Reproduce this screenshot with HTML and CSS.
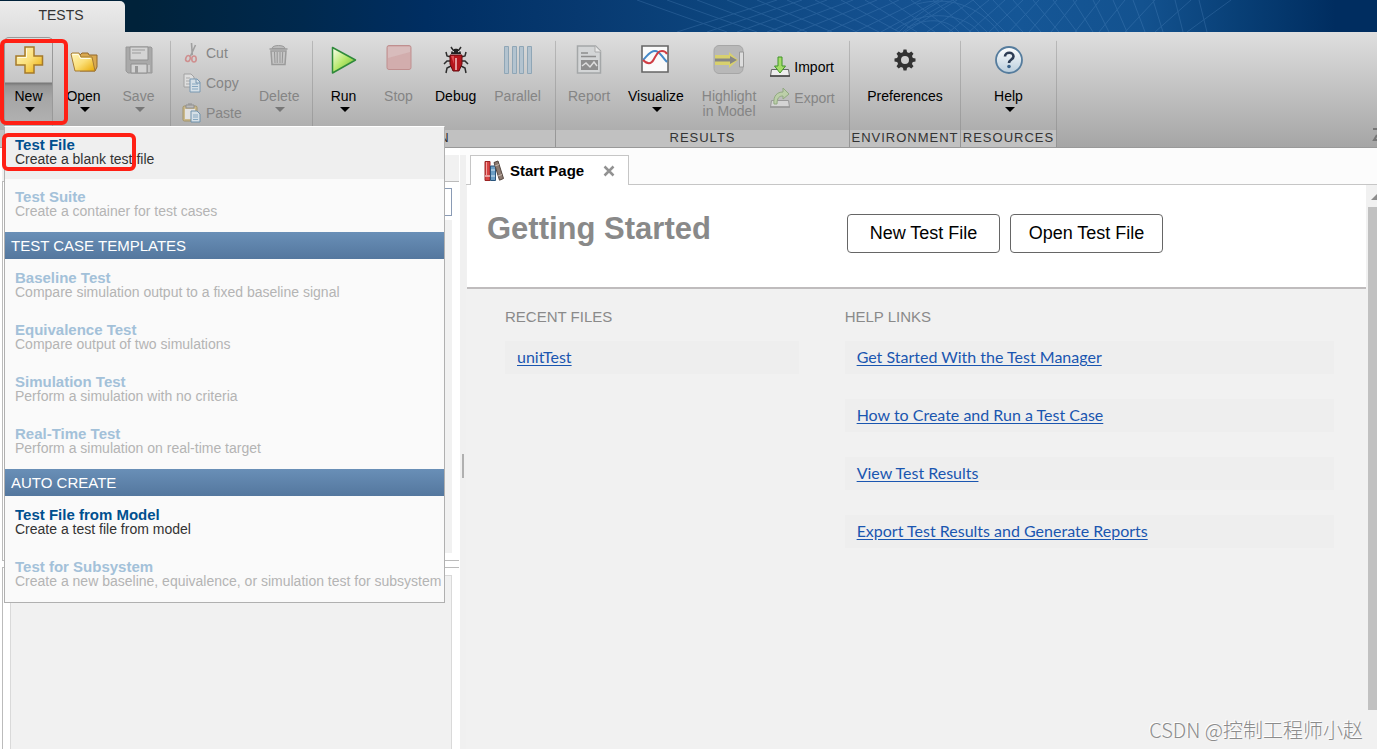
FILE: index.html
```html
<!DOCTYPE html>
<html lang="en">
<head>
<meta charset="utf-8">
<title>Test Manager</title>
<link rel="stylesheet" href="styles.css">
</head>
<body>
<div class="app">
  <header class="banner">
    <svg class="banner-art" viewBox="0 0 800 32" preserveAspectRatio="xMaxYMid slice" fill="none" stroke="#6fa3d8" aria-hidden="true">
      <g opacity=".22">
        <path d="M60 0l90 32M90 0l90 32M120 0l85 32M150 0l80 32M180 0l75 32M210 0l70 32M238 0l64 32M264 0l58 32M288 0l52 32M312 0l46 32M334 0l42 32M356 0l38 32M376 0l34 32M396 0l32 32M416 0l30 32M436 0l28 32M456 0l26 32M476 0l24 32M496 0l20 32M516 0l16 32M536 0l14 32M556 0l12 32M576 0l10 32M598 0l8 32M622 0l8 32"/>
        <path d="M100 32L200 0M130 32l95-32M160 32l90-32M190 32l86-32M220 32l80-32M250 32l72-32M278 32l66-32M304 32l58-32M328 32l52-32M350 32l46-32M372 32l40-32M392 32l36-32M412 32l34-32M432 32l30-32M452 32l28-32M474 32l26-32M498 32l25-32M522 32l26-32M548 32l30-32M578 32l36-32M610 32l44-32"/>
        <path d="M322 32C336 18 346 10 366 0M326 32C340 20 352 12 376 0M318 30C350 6 390 16 402 32M330 28C352 16 372 20 382 32M340 4C370-4 400 4 422 32"/>
      </g>
    </svg>
    <button class="ribbon-tab" type="button">TESTS</button>
  </header>

  <nav class="ribbon" aria-label="Tests">
    <section class="group group-file" aria-label="File">
      <div class="group-body">
        <button class="tool tool-open" type="button" aria-expanded="true">
          <svg class="icon" viewBox="0 0 28 28"><defs><linearGradient id="gold" x1="0" y1="0" x2="1" y2="1"><stop offset="0" stop-color="#fff6bf"/><stop offset=".5" stop-color="#fbe07a"/><stop offset="1" stop-color="#e9a800"/></linearGradient></defs><path d="M10 1h9v9h8.500v9H19v8h-9v-8H1v-9h9z" fill="url(#gold)" stroke="#a5792a" stroke-width="1.500"/><path d="M11.500 2.500v9h-9" fill="none" stroke="#fffbe0"/></svg>
          <span class="tool-label">New</span><span class="caret"></span>
        </button>
        <button class="tool" type="button">
          <svg class="icon" viewBox="0 0 28 28"><path d="M10 9l2-2h6l1 2h8v12l-2 4H10z" fill="#d9a94f" stroke="#94682a"/><path d="M1 8l1-1h7l2 4h11l3 14H5z" fill="url(#gold)" stroke="#a47b35"/><path d="M2.500 8.500h6l2 4h10" fill="none" stroke="#fffde8"/></svg>
          <span class="tool-label">Open</span><span class="caret"></span>
        </button>
        <button class="tool" type="button" disabled>
          <svg class="icon" viewBox="0 0 28 28"><path d="M1 1h25l1 1v25H3l-2-2z" fill="#a9a9a9" stroke="#989898"/><path d="M5 1h18v13H5z" fill="#d4d4d4" stroke="#919191"/><path d="M7 4h13M7 7h9" stroke="#9b9b9b"/><path d="M6 18h16v9H6z" fill="#d2d2d2" stroke="#8f8f8f"/><path d="M10 20h3v7h-3z" fill="#999"/><path d="M23 19h2v7h-2z" fill="#c5c5c5"/></svg>
          <span class="tool-label">Save</span><span class="caret"></span>
        </button>
      </div>
      <div class="group-name"></div>
    </section>

    <section class="group group-edit" aria-label="Edit">
      <div class="group-body">
        <div class="tool-list">
          <button class="tool-row" type="button" disabled>
            <svg class="icon-sm" viewBox="0 0 20 20"><path d="M9.500 0l.8 12M13.500 2l-5 11" stroke="#a0a0a0" stroke-width="1.600"/><ellipse cx="6" cy="15.500" rx="2.200" ry="3" fill="none" stroke="#cf8f8f" stroke-width="1.600" transform="rotate(20 6 15.500)"/><ellipse cx="12" cy="16" rx="2.200" ry="3" fill="none" stroke="#cf8f8f" stroke-width="1.600"/></svg>Cut</button>
          <button class="tool-row" type="button" disabled>
            <svg class="icon-sm" viewBox="0 0 20 20"><path d="M2 1h7l3 3v10H2z" fill="#dedede" stroke="#a2a2a2"/><path d="M4 5h4M4 8h5M4 11h4" stroke="#aaa"/><path d="M8 6h7l3 3v10H8z" fill="#d5dfe6" stroke="#7898b2"/><path d="M10 11h6M10 13.500h6M10 16h6" stroke="#86a7c0"/><path d="M14 6v4h4" fill="none" stroke="#7898b2"/></svg>Copy</button>
          <button class="tool-row" type="button" disabled>
            <svg class="icon-sm" viewBox="0 0 20 20"><rect x="1" y="3" width="14" height="15" rx="1.500" fill="#cbb98b" stroke="#a29368"/><path d="M3 6h10v10H3z" fill="#e2e2e2"/><path d="M4 2h8v3H4zM6 1h4" fill="#bbb" stroke="#8f8f8f"/><path d="M9 8h6l3 3v8H9z" fill="#d5dfe6" stroke="#6f91ac"/><path d="M11 12h5M11 14h5M11 16.500h5" stroke="#86a7c0"/></svg>Paste</button>
        </div>
        <button class="tool" type="button" disabled>
          <svg class="icon" viewBox="0 0 28 28"><path d="M7 2.500c0-4 13-4 13 0z" fill="#bbb" stroke="#999"/><path d="M4.500 3h18M6 5h15l-1 13.500H7z" fill="#c6c6c6" stroke="#9b9b9b" stroke-width="1.500"/><path d="M9.500 6l.5 11M12.200 6v11M15 6v11M17.700 6l-.5 11" stroke="#969696"/></svg>
          <span class="tool-label">Delete</span><span class="caret"></span>
        </button>
      </div>
      <div class="group-name"></div>
    </section>

    <section class="group group-run">
      <div class="group-body">
        <button class="tool" type="button">
          <svg class="icon" viewBox="0 0 28 28"><defs><linearGradient id="lime" x1="0" y1="0" x2="1" y2="1"><stop offset=".1" stop-color="#f1fbd8"/><stop offset=".5" stop-color="#b6e86b"/><stop offset="1" stop-color="#64b52c"/></linearGradient></defs><path d="M2.500 1.500l23 12.500-23 13z" fill="url(#lime)" stroke="#2f8a3b" stroke-width="1.500" stroke-linejoin="round"/></svg>
          <span class="tool-label">Run</span><span class="caret"></span>
        </button>
        <button class="tool" type="button" disabled>
          <svg class="icon" viewBox="0 0 28 28"><rect x="2" y="-.5" width="24" height="24" rx="2" fill="#d2adad" stroke="#bf8f8f"/><path d="M3 12V1h22v5z" fill="#d8bcbc"/></svg>
          <span class="tool-label">Stop</span>
        </button>
        <button class="tool" type="button">
          <svg class="icon" viewBox="0 0 28 28"><g fill="none" stroke="#2c2c2c" stroke-width="1.500"><path d="M9 11L5 10 4 6M19 11l4-1 1-4M8 15H5l-3 3M20 15h3l3 3M9 20l-4 2-1 5M19 20l4 2 1 5M11 4L9 1M17 4l2-3"/></g><path d="M9 8c0-7 10-7 10 0z" fill="#222"/><path d="M9 4l3 2M19 4l-3 2" stroke="#eee"/><path d="M8 9h12v9l-3 7h-6l-3-7z" fill="#b5161c" stroke="#650a0e"/><path d="M14 12v12" stroke="#f3c5c5" stroke-width="1.500"/><path d="M9 10h3v8z" fill="#df4b50"/></svg>
          <span class="tool-label">Debug</span>
        </button>
        <button class="tool" type="button" disabled>
          <svg class="icon" viewBox="0 0 28 28" fill="#b3c3cf" stroke="#8fa6b6"><path d="M.5.500h4v27h-4zM8.500.500h4v27h-4zM15.500.500h4v27h-4zM23.500.500h4v27h-4z"/></svg>
          <span class="tool-label">Parallel</span>
        </button>
      </div>
      <h2 class="group-name">RUN</h2>
    </section>

    <section class="group group-results">
      <div class="group-body">
        <button class="tool" type="button" disabled>
          <svg class="icon" viewBox="0 0 28 28"><path d="M2.500 0h18l5 5v22h-23z" fill="#d3d5d6" stroke="#a4a7a8" stroke-width="1.500"/><path d="M20 0v6h6" fill="#e8e8e8" stroke="#aaa"/><path d="M6 7h7M6 10.500h15" stroke="#8d8d8d" stroke-width="1.500"/><path d="M6 14h17v10H6z" fill="#8e8e8e"/><path d="M7 20l4-3 4 4 4-5 3 4" fill="none" stroke="#ddd" stroke-width="1.500"/></svg>
          <span class="tool-label">Report</span>
        </button>
        <button class="tool" type="button">
          <svg class="icon" viewBox="0 0 28 28"><path d="M0 0h26v26H0z" fill="#fafafa" stroke="#666" stroke-width="1.600"/><g fill="none" stroke-width="2"><path d="M1 14C6 9 8 5 13 5s6 5 12 11" stroke="#4388c8"/><path d="M1 14c4 4 8 5 11-1 3-5 4-8 8-8 3 0 4 1 5 3" stroke="#cf3d43"/></g></svg>
          <span class="tool-label">Visualize</span><span class="caret"></span>
        </button>
        <button class="tool" type="button" disabled>
          <svg class="icon icon-wide" viewBox="0 0 30 28"><rect x="0" y="-.5" width="29" height="28" rx="5" fill="#b8b8b8" stroke="#a6a6a6"/><path d="M1 9h14V6l9 8-9 8v-3H1z" fill="#d8d06d"/><path d="M1 12.500h15V10l7 4-7 4v-2.500H1z" fill="#858585"/><path d="M25.500 6h4v15h-4z" fill="#ddd" stroke="#999"/></svg>
          <span class="tool-label">Highlight<br>in Model</span>
        </button>
        <div class="tool-list tool-list-io">
          <button class="tool-row" type="button">
            <svg class="icon-sm" viewBox="0 0 20 20"><path d="M1.500 12.500h17l1 6.500H.5z" fill="#eee" stroke="#666"/><path d="M0 19h20" stroke="#444" stroke-width="1.500"/><path d="M8 0h4v9h3.500L10 16 4.500 9H8z" fill="#a4dc68" stroke="#3f9427"/></svg>Import</button>
          <button class="tool-row" type="button" disabled>
            <svg class="icon-sm" viewBox="0 0 20 20"><path d="M1.500 12.500h17l1 6.500H.5z" fill="#d4d4d4" stroke="#999"/><path d="M0 19h20" stroke="#999" stroke-width="1.500"/><path d="M4 16C3 8 7 4 13 4V0l6 6-6 5V8c-4 0-6 2-6 8z" fill="#bccfa9" stroke="#91a981"/></svg>Export</button>
        </div>
      </div>
      <h2 class="group-name">RESULTS</h2>
    </section>

    <section class="group group-env">
      <div class="group-body">
        <button class="tool" type="button">
          <svg class="icon" viewBox="0 0 28 28"><g fill="#333"><path id="teeth" d="M12.500 3.500h3l1 5h-5zM12.500 24.500h3l1-5h-5zM3.500 12.500v3l5 1v-5zM24.500 12.500v3l-5 1v-5z"/><use href="#teeth" transform="rotate(45 14 14)"/></g><circle cx="14" cy="14" r="6" fill="none" stroke="#333" stroke-width="4"/></svg>
          <span class="tool-label">Preferences</span>
        </button>
      </div>
      <h2 class="group-name">ENVIRONMENT</h2>
    </section>

    <section class="group group-help">
      <div class="group-body">
        <button class="tool" type="button">
          <svg class="icon" viewBox="0 0 28 28"><defs><linearGradient id="glass" x1="0" y1="0" x2="0" y2="1"><stop offset="0" stop-color="#fff"/><stop offset="1" stop-color="#b9cddc"/></linearGradient></defs><circle cx="14" cy="14" r="13" fill="url(#glass)" stroke="#557c9d" stroke-width="1.800"/><path d="M10 10.500c0-5 8.500-5 8.500 0 0 3-4.500 3-4.500 6.500" fill="none" stroke="#2e3d55" stroke-width="2.600"/><circle cx="14" cy="20.500" r="1.800" fill="#38628a"/></svg>
          <span class="tool-label">Help</span><span class="caret"></span>
        </button>
      </div>
      <h2 class="group-name">RESOURCES</h2>
    </section>
    <svg class="ribbon-pin" viewBox="0 0 4 14" fill="none" stroke="#777" stroke-width="2" aria-hidden="true"><path d="M0 1h4M4 7l-3 5h3"/></svg>

    <div class="menu" role="menu" aria-label="New">
      <div class="menu-group menu-group-first">
        <button class="menu-item menu-item-hover" type="button" role="menuitem"><strong>Test File</strong><span>Create a blank test file</span></button>
        <button class="menu-item" type="button" role="menuitem" disabled><strong>Test Suite</strong><span>Create a container for test cases</span></button>
      </div>
      <h3 class="menu-title">TEST CASE TEMPLATES</h3>
      <div class="menu-group">
        <button class="menu-item" type="button" role="menuitem" disabled><strong>Baseline Test</strong><span>Compare simulation output to a fixed baseline signal</span></button>
        <button class="menu-item" type="button" role="menuitem" disabled><strong>Equivalence Test</strong><span>Compare output of two simulations</span></button>
        <button class="menu-item" type="button" role="menuitem" disabled><strong>Simulation Test</strong><span>Perform a simulation with no criteria</span></button>
        <button class="menu-item" type="button" role="menuitem" disabled><strong>Real-Time Test</strong><span>Perform a simulation on real-time target</span></button>
      </div>
      <h3 class="menu-title">AUTO CREATE</h3>
      <div class="menu-group">
        <button class="menu-item" type="button" role="menuitem"><strong>Test File from Model</strong><span>Create a test file from model</span></button>
        <button class="menu-item" type="button" role="menuitem" disabled><strong>Test for Subsystem</strong><span>Create a new baseline, equivalence, or simulation test for subsystem</span></button>
      </div>
    </div>
    <div class="mark mark-new"></div>
    <div class="mark mark-file"></div>
  </nav>

  <div class="workspace">
    <aside class="browser">
      <div class="browser-tabs"></div>
      <div class="browser-tree">
        <input class="filter" type="text" aria-label="Filter tests">
        <div class="tree"></div>
      </div>
      <div class="browser-props"><div class="props"></div></div>
    </aside>
    <div class="splitter"></div>
    <main class="document">
      <div class="doc-tabs">
        <div class="doc-tab">
          <svg class="books" viewBox="0 0 20 20"><path d="M1 .5h5v19H1z" fill="#d84444" stroke="#9b2424"/><path d="M2.500 1v13" stroke="#f3a4a0"/><path d="M1 15h5" stroke="#fff"/><path d="M6.500 5h5v14.500h-5z" fill="#6b9fc6" stroke="#2a557c"/><path d="M7 9h4M7 15h4" stroke="#d6e8f5"/><path d="M10 1.500l4-1.500 5.500 17.500-4 1.700z" fill="#8c7a70" stroke="#54463f"/><path d="M11 5l4-1.500M14 15l4-1.500" stroke="#c7b8ad"/></svg>
          <span>Start Page</span>
          <button class="doc-close" type="button" aria-label="Close"><svg viewBox="0 0 12 12"><path d="M1.500 1.500l9 9M10.500 1.500l-9 9" stroke="#929292" stroke-width="2.500"/></svg></button>
        </div>
      </div>
      <div class="doc-view">
        <div class="page">
          <div class="hero">
            <h1>Getting Started</h1>
            <button class="big-button" type="button">New Test File</button>
            <button class="big-button" type="button">Open Test File</button>
          </div>
          <div class="columns">
            <section><h2>RECENT FILES</h2><div class="card"><a href="#">unitTest</a></div></section>
            <section><h2>HELP LINKS</h2>
              <div class="card"><a href="#">Get Started With the Test Manager</a></div>
              <div class="card"><a href="#">How to Create and Run a Test Case</a></div>
              <div class="card"><a href="#">View Test Results</a></div>
              <div class="card"><a href="#">Export Test Results and Generate Reports</a></div>
            </section>
          </div>
        </div>
        <div class="scrollbar"><svg viewBox="0 0 9 20"><path d="M9 9v6H3z" fill="#8c8c8c"/></svg><div class="thumb"></div></div>
      </div>
      <div class="watermark">CSDN @控制工程师小赵</div>
    </main>
  </div>
</div>
</body>
</html>
```
FILE: styles.css
```css
* { box-sizing: border-box; }
body { margin: 0; font: 14px/16px "Liberation Sans", Arial, sans-serif; color: #000; }
button { margin: 0; padding: 0; border: 0; background: none; font: inherit; color: inherit; }
h1, h2, h3 { margin: 0; font-weight: normal; }
svg { display: block; overflow: visible; }

.app { display: flex; flex-direction: column; height: 100vh; overflow: hidden; }

/* Banner */
.banner {
  position: relative;
  flex: none;
  display: flex;
  align-items: flex-end;
  height: 32px;
  overflow: hidden;
  background: linear-gradient(90deg, #00223a 10%, #00294e 22%, #002e62 31%, #073970 42%, #0d467f 53%, #14508f 64%, #155696 74%, #13528f 83%, #083f76 90%, #002d60 97%);
}
.banner-art { position: absolute; right: 0; top: 0; width: 800px; height: 32px; }
.ribbon-tab {
  position: relative;
  width: 125px;
  height: 31px;
  padding: 0 3px 4px 0;
  border-radius: 0 5px 0 0;
  background: linear-gradient(#ececec, #dedede);
  color: #333;
}

/* Ribbon */
.ribbon {
  position: relative;
  z-index: 2;
  flex: none;
  display: flex;
  height: 116px;
  background: linear-gradient(#dfdfdf, #a5a5a5);
  border-bottom: 1px solid #999;
}
.group { display: flex; flex-direction: column; flex: none; position: relative; border-right: 1px solid #a3a3a3; border-image: linear-gradient(transparent 8%, #b8b8b8 9%, #939393) 1; }
.group-file { min-width: 171px; }
.group-edit { min-width: 142px; }
.group-run { min-width: 243px; }
.group-results { min-width: 294px; }
.group-env { min-width: 111px; }
.group-help { min-width: 96px; }
.group-body { display: flex; flex: 1; padding: 0 3px; }
.group-file .group-body { padding: 0 1px; }
.group-env .group-body, .group-help .group-body { justify-content: center; }
.group-name { height: 17px; background: #c1c1c1; color: #333; font-size: 13px; line-height: 16px; letter-spacing: 1px; text-align: center; }

.tool { display: flex; flex-direction: column; align-items: center; min-width: 55px; padding: 14px 9px 0; }
.icon { width: 28px; height: 28px; flex: none; }
.icon-wide { width: 30px; }
.tool-label { margin-top: 15px; line-height: 15px; text-align: center; }
.caret { margin: 3px 0 0 2px; border: 5px solid transparent; border-top-color: #000; border-bottom: 0; }
.tool:disabled, .tool-row:disabled { color: #858585; }
.tool:disabled .caret { border-top-color: #777; }
.group-file .tool { padding-left: 0; padding-right: 0; }
.group-file .tool-open {
  min-width: 49px;
  margin: 5px 3px 0;
  padding-top: 8px;
  border: 1px solid #999;
  border-bottom: 0;
  border-radius: 5px 5px 0 0;
  background: linear-gradient(transparent 44px, #777 45px, #969696 48px, #a6a6a6 60px, #b4b4b4);
}

.tool-list { display: flex; flex-direction: column; gap: 14px; padding: 13px 0 0 8px; width: 76px; }
.tool-list-io { padding: 27px 0 0 5px; gap: 15px; }
.tool-row { display: flex; align-items: center; gap: 4px; height: 16px; white-space: nowrap; }
.icon-sm { width: 20px; height: 20px; flex: none; }
.ribbon-pin { position: absolute; right: 0; bottom: 5px; width: 4px; height: 14px; }

/* New menu */
.menu { position: absolute; left: 4px; top: 94px; width: 441px; border: 1px solid #b0b0b0; border-top-color: #fff; background: #fafafa; }
.menu-group { padding: 1px 0; }
.menu-group-first { padding-top: 0; }
.menu-item { display: block; width: 100%; height: 52px; padding: 0 10px 2px; text-align: left; line-height: 14px; color: #333; }
.menu-item strong, .menu-item span { display: block; white-space: nowrap; }
.menu-item strong { font-size: 15px; color: #00508f; }
.menu-item-hover { background: #efefef; }
.menu-item:disabled { color: #b4b4b4; }
.menu-item:disabled strong { color: #a3c1d9; }
.menu-title { height: 27px; padding: 0 6px; background: linear-gradient(#698fb7, #54779e); color: #fff; font-size: 15px; line-height: 27px; }

.mark { position: absolute; border: 4px solid #ff2015; border-radius: 6px; pointer-events: none; }
.mark-new { left: 0; top: 7px; width: 68px; height: 86px; }
.mark-file { left: 2px; top: 101px; width: 134px; height: 38px; }

/* Workspace */
.workspace { flex: 1; display: flex; min-height: 0; background: #fcfcfc; }
.browser { flex: none; display: flex; flex-direction: column; width: 460px; padding: 7px 1px 0 2px; background: #fff; }
.browser-tabs { height: 26px; background: #f1f1f1; }
.browser-tree { display: flex; flex-direction: column; gap: 4px; height: 380px; padding: 6px 7px 7px 6px; border: 1px solid #bbb; border-right: 0; }
.filter { height: 28px; border: 1px solid #8a9bb5; background: #fff; }
.tree { flex: 1; background: #f1f1f1; }
.browser-props { flex: 1; display: flex; margin-top: 6px; padding: 7px 7px 0; border: 1px solid #bbb; border-width: 1px 0 0 1px; }
.props { flex: 1; border: 1px solid #d9d9d9; border-bottom: 0; background: #f1f1f1; }
.splitter { flex: none; display: flex; align-items: center; justify-content: center; width: 6px; margin-top: 7px; background: #f0f0f0; }
.splitter::before { content: ""; width: 2px; height: 24px; margin-bottom: -28px; background: #b0b0b0; }

.document { position: relative; flex: 1; display: flex; flex-direction: column; min-width: 0; }
.doc-tabs { flex: none; height: 37px; padding: 7px 0 0 4px; border-bottom: 1px solid #c6c6c6; }
.doc-tab { display: flex; align-items: center; width: 159px; height: 30px; padding: 0 13px; border: 1px solid #c6c6c6; border-bottom: 0; background: #fff; font-size: 15px; font-weight: bold; }
.books { width: 20px; height: 20px; margin-right: 6px; }
.doc-close { margin-left: auto; }
.doc-close svg { width: 12px; height: 12px; }
.doc-view { flex: 1; display: flex; min-height: 0; background: #f1f1f1; }
.page { flex: 1; margin-left: 1px; }
.hero { display: flex; align-items: center; height: 104px; padding: 0 20px 6px; gap: 10px; background: #fff; border-bottom: 2px solid #bfbcbd; }
.hero h1 { width: 350px; padding-bottom: 8px; color: #898989; font-size: 31px; line-height: 36px; font-weight: bold; }
.big-button { width: 153px; height: 39px; border: 1px solid #666; border-radius: 4px; background: #fff; font-size: 18px; white-space: nowrap; }
.columns { display: grid; grid-template-columns: 3fr 5fr; gap: 46px; padding: 19px 32px 0 38px; }
.columns h2 { margin-bottom: 15px; color: #8a8a8a; font-size: 15px; line-height: 18px; }
.card { height: 33px; margin-bottom: 25px; padding: 0 12px; background: #eee; line-height: 32px; }
.card a { color: #1a56b0; font-family: Lato, sans-serif; font-size: 16px; text-underline-offset: 2px; }
.scrollbar { display: flex; flex-direction: column; flex: none; width: 11px; padding-left: 2px; }
.scrollbar svg { width: 9px; height: 20px; margin-bottom: 2px; }
.thumb { flex: 1; margin-bottom: 39px; background: #c1c1c1; }
.watermark { position: absolute; right: 14px; bottom: 6px; color: #8c8c8c; font: 300 20px/26px "Noto Sans CJK SC", sans-serif; text-shadow: -1px -1px 0 #fff; }
```
